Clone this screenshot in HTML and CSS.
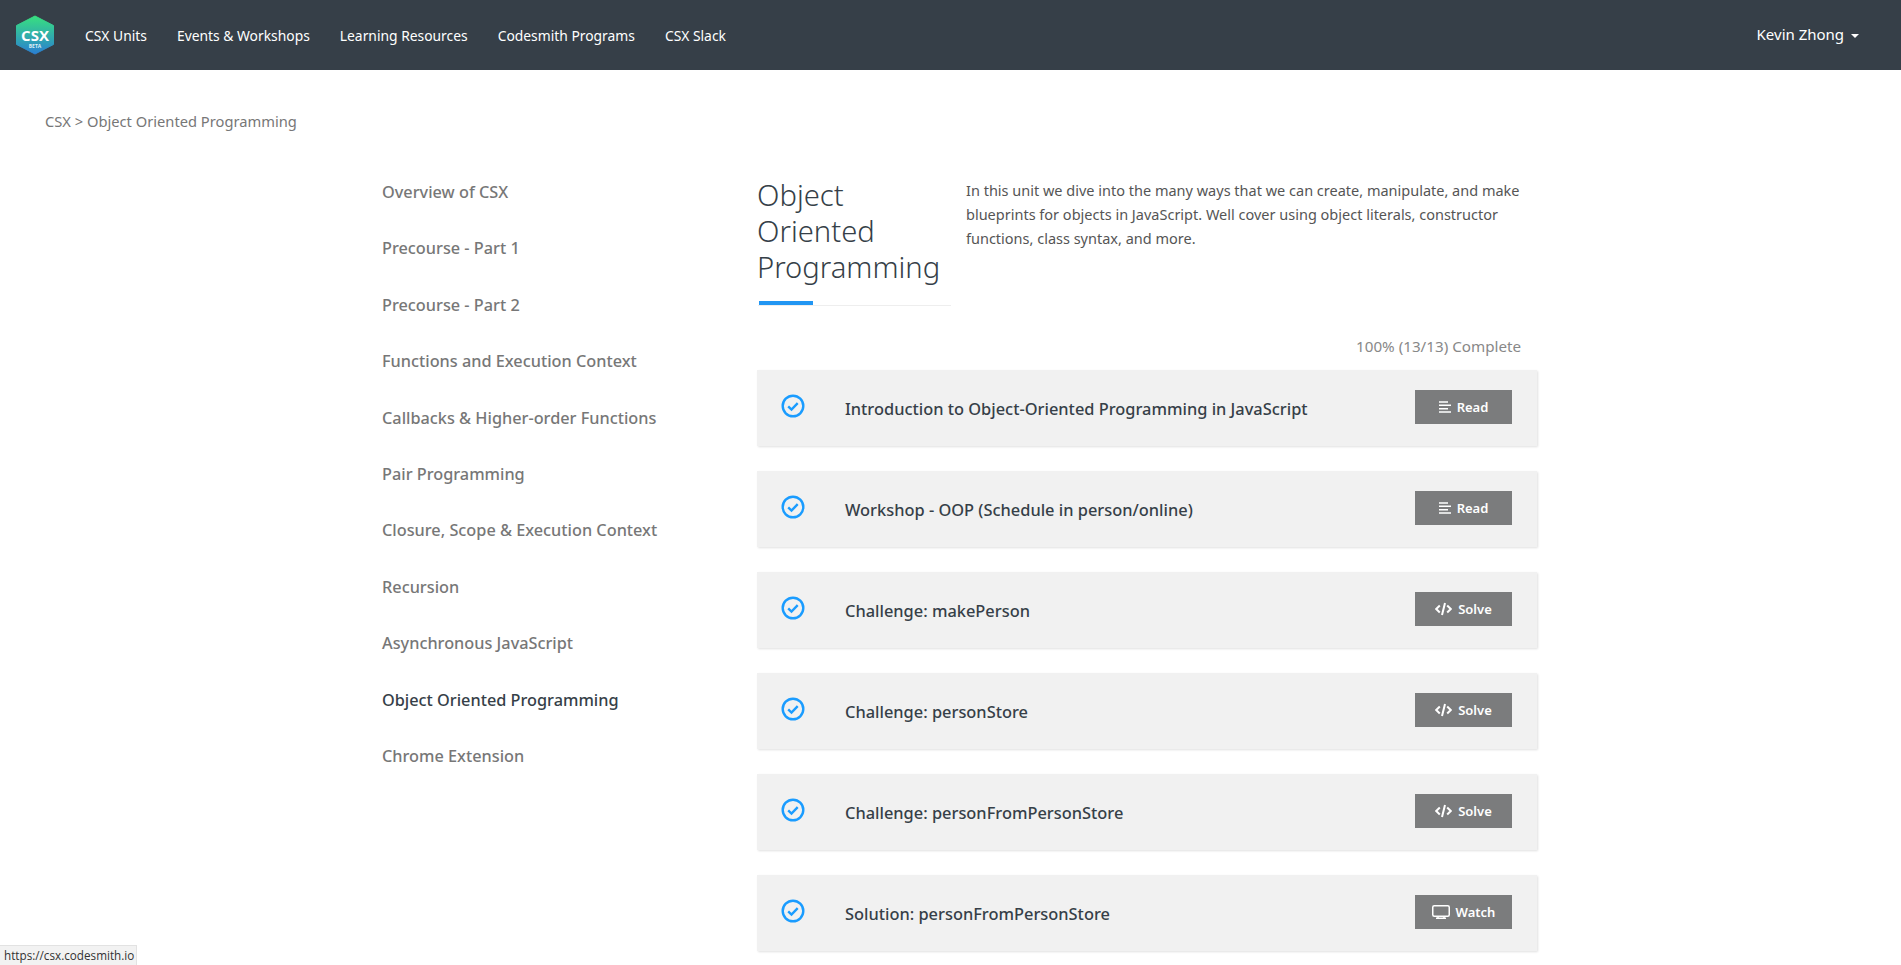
FILE: index.html
```html
<!DOCTYPE html>
<html>

<head>
  <link rel="stylesheet" href="styles.css">
  <title>CSX</title>
</head>

<body>
  <nav class="topbar">
    <svg class="logo" width="40" height="40" viewBox="0 0 40 40">
      <defs>
        <linearGradient id="hex" x1="0" y1="0" x2="0" y2="1">
          <stop offset="0" stop-color="#38e07f"/>
          <stop offset="1" stop-color="#2a7fd2"/>
        </linearGradient>
      </defs>
      <polygon points="20,1 38.5,10.5 38.5,29.5 20,39 1.5,29.5 1.5,10.5" fill="url(#hex)" stroke="url(#hex)" stroke-width="1" stroke-linejoin="round"/>
      <text x="20" y="26" class="logo-text">CSX</text>
      <text x="20" y="33" class="logo-beta">BETA</text>
    </svg>
    <a class="nav-link">CSX Units</a>
    <a class="nav-link">Events &amp; Workshops</a>
    <a class="nav-link">Learning Resources</a>
    <a class="nav-link">Codesmith Programs</a>
    <a class="nav-link">CSX Slack</a>
    <a class="user">Kevin Zhong <span class="caret"></span></a>
  </nav>

  <div class="crumbs">CSX &gt; Object Oriented Programming</div>

  <div class="main">
    <ul class="units">
      <li>Overview of CSX</li>
      <li>Precourse - Part 1</li>
      <li>Precourse - Part 2</li>
      <li>Functions and Execution Context</li>
      <li>Callbacks &amp; Higher-order Functions</li>
      <li>Pair Programming</li>
      <li>Closure, Scope &amp; Execution Context</li>
      <li>Recursion</li>
      <li>Asynchronous JavaScript</li>
      <li class="active">Object Oriented Programming</li>
      <li>Chrome Extension</li>
    </ul>

    <div class="content">
      <div class="head">
        <div class="title-box">
          <h1>Object Oriented Programming</h1>
          <div class="rule"><div class="rule-fill"></div></div>
        </div>
        <p class="intro">In this unit we dive into the many ways that we can create, manipulate, and make blueprints for objects in JavaScript. Well cover using object literals, constructor functions, class syntax, and more.</p>
      </div>

      <div class="progress">100% (13/13) Complete</div>

      <div class="row">
        <svg class="check" width="24" height="24" viewBox="0 0 24 24"><circle cx="12" cy="12" r="10.3"/><path d="M7.2 12.4l3.3 3.2 6.2-6.4"/></svg>
        <div class="row-title">Introduction to Object-Oriented Programming in JavaScript</div>
        <a class="btn"><svg class="ico" width="12" height="12" viewBox="0 0 12 12"><path d="M0 1h9M0 4.3h12M0 7.7h9M0 11h12"/></svg>Read</a>
      </div>
      <div class="row">
        <svg class="check" width="24" height="24" viewBox="0 0 24 24"><circle cx="12" cy="12" r="10.3"/><path d="M7.2 12.4l3.3 3.2 6.2-6.4"/></svg>
        <div class="row-title">Workshop - OOP (Schedule in person/online)</div>
        <a class="btn"><svg class="ico" width="12" height="12" viewBox="0 0 12 12"><path d="M0 1h9M0 4.3h12M0 7.7h9M0 11h12"/></svg>Read</a>
      </div>
      <div class="row">
        <svg class="check" width="24" height="24" viewBox="0 0 24 24"><circle cx="12" cy="12" r="10.3"/><path d="M7.2 12.4l3.3 3.2 6.2-6.4"/></svg>
        <div class="row-title">Challenge: makePerson</div>
        <a class="btn"><svg class="ico ico-bold" width="17" height="14" viewBox="0 0 17 14"><path d="M4.8 3.5L1.2 7l3.6 3.5M12.2 3.5L15.8 7l-3.6 3.5M10 1L7 13"/></svg>Solve</a>
      </div>
      <div class="row">
        <svg class="check" width="24" height="24" viewBox="0 0 24 24"><circle cx="12" cy="12" r="10.3"/><path d="M7.2 12.4l3.3 3.2 6.2-6.4"/></svg>
        <div class="row-title">Challenge: personStore</div>
        <a class="btn"><svg class="ico ico-bold" width="17" height="14" viewBox="0 0 17 14"><path d="M4.8 3.5L1.2 7l3.6 3.5M12.2 3.5L15.8 7l-3.6 3.5M10 1L7 13"/></svg>Solve</a>
      </div>
      <div class="row">
        <svg class="check" width="24" height="24" viewBox="0 0 24 24"><circle cx="12" cy="12" r="10.3"/><path d="M7.2 12.4l3.3 3.2 6.2-6.4"/></svg>
        <div class="row-title">Challenge: personFromPersonStore</div>
        <a class="btn"><svg class="ico ico-bold" width="17" height="14" viewBox="0 0 17 14"><path d="M4.8 3.5L1.2 7l3.6 3.5M12.2 3.5L15.8 7l-3.6 3.5M10 1L7 13"/></svg>Solve</a>
      </div>
      <div class="row">
        <svg class="check" width="24" height="24" viewBox="0 0 24 24"><circle cx="12" cy="12" r="10.3"/><path d="M7.2 12.4l3.3 3.2 6.2-6.4"/></svg>
        <div class="row-title">Solution: personFromPersonStore</div>
        <a class="btn"><svg class="ico" width="18" height="14" viewBox="0 0 18 14"><rect x="0.75" y="0.75" width="16.5" height="10.5" rx="1.5"/><path d="M6 11.5v1.5M12 11.5v1.5M4 13.25h10"/></svg>Watch</a>
      </div>
    </div>
  </div>

  <div class="status">https://csx.codesmith.io</div>
</body>

</html>
```

FILE: styles.css
```css
html,
body {
  margin: 0;
  height: 965px;
  overflow: hidden;
  font-family: "Noto Sans", sans-serif;
  background-color: #ffffff;
  color: #777777;
}

.topbar {
  display: flex;
  align-items: center;
  height: 70px;
  padding: 0 42px 0 15px;
  background-color: #363f48;
}

.logo {
  margin-right: 30px;
}

.logo-text {
  font-family: "Open Sans", sans-serif;
  font-size: 15px;
  font-weight: 700;
  fill: #ffffff;
  text-anchor: middle;
}

.logo-beta {
  font-family: "Open Sans", sans-serif;
  font-size: 5px;
  font-weight: 700;
  fill: #dfeef5;
  text-anchor: middle;
}

.nav-link {
  margin-right: 30px;
  font-size: 13.85px;
  color: #ffffff;
}

.user {
  margin-left: auto;
  margin-top: -2px;
  font-size: 15px;
  color: #ffffff;
}

.caret {
  display: inline-block;
  margin-left: 3px;
  vertical-align: middle;
  border-top: 4px solid #ffffff;
  border-left: 4px solid transparent;
  border-right: 4px solid transparent;
}

.crumbs {
  padding: 40px 0 0 45px;
  font-size: 14.7px;
  line-height: 22px;
  color: #777777;
}

.main {
  display: flex;
  padding: 45px 0 0 382px;
}

.units {
  flex: none;
  list-style: none;
  width: 375px;
  margin: 0;
  padding: 3px 0 0 0;
}

.units li {
  height: 56.4px;
  font-size: 16.3px;
  font-weight: 500;
  line-height: 24px;
  color: #777777;
}

.units .active {
  color: #363f48;
}

.content {
  flex: none;
  width: 780px;
}

.head {
  display: flex;
}

.title-box {
  flex: none;
  width: 194px;
  margin-right: 15px;
}

h1 {
  margin: 0;
  font-size: 29.2px;
  font-weight: 300;
  line-height: 36px;
  color: #363f48;
}

.rule {
  height: 4px;
  margin: 16px 0 0 1px;
  border-bottom: 1px solid #eeeeee;
}

.rule-fill {
  width: 54px;
  height: 4px;
  margin-left: 1px;
  background-color: #2196f3;
}

.intro {
  margin: 1px 0 0 0;
  font-size: 14.5px;
  line-height: 24px;
  color: #555555;
}

.progress {
  margin-top: 29px;
  margin-bottom: 13px;
  padding-right: 16px;
  text-align: right;
  font-size: 15.2px;
  line-height: 22px;
  color: #888888;
}

.row {
  display: flex;
  align-items: center;
  height: 76px;
  margin-bottom: 25px;
  padding: 0 25px 0 24px;
  background-color: #f1f1f1;
  box-shadow: 1px 1px 2px rgba(0, 0, 0, 0.12);
}

.check {
  margin-right: 40px;
  margin-bottom: 4px;
  fill: none;
  stroke: #1a9cff;
  stroke-width: 2.4;
}

.row-title {
  flex: 1;
  font-size: 16.4px;
  font-weight: 500;
  color: #363f48;
}

.btn {
  display: flex;
  align-items: center;
  justify-content: center;
  width: 97px;
  height: 34px;
  margin-bottom: 2px;
  background-color: #7b7c7d;
  font-size: 13px;
  font-weight: 600;
  color: #ffffff;
}

.ico {
  margin-right: 6px;
  fill: none;
  stroke: #ffffff;
  stroke-width: 1.5;
}

.ico-bold {
  stroke-width: 2;
}

.status {
  position: absolute;
  left: 0;
  bottom: 0;
  width: 132px;
  height: 19px;
  padding-left: 4px;
  background-color: #f2f2f2;
  border-top: 1px solid #e2e2e2;
  border-right: 1px solid #e2e2e2;
  font-family: "Open Sans", sans-serif;
  font-size: 11.7px;
  line-height: 19px;
  color: #333333;
}
```
